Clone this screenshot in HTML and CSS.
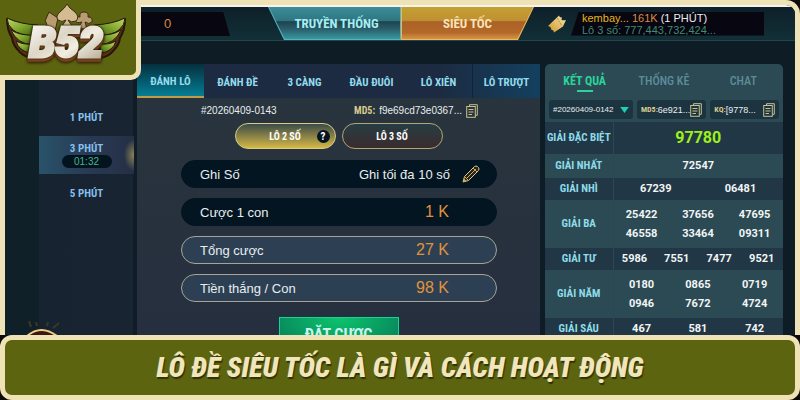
FILE: index.html
```html
<!DOCTYPE html>
<html lang="vi">
<head>
  <meta charset="UTF-8" />
  <meta name="viewport" content="width=device-width, initial-scale=1.0"/>
  <title>Lô đề siêu tốc</title>
  <link rel="stylesheet" href="styles.css">
</head>
<body>
  <svg class="sprite" width="0" height="0" aria-hidden="true">
    <symbol id="copy" viewBox="0 0 12 14">
      <path d="M3.5 2.5V.7H11.3V11.3H9.5" fill="none" stroke="currentColor" stroke-width="1"/>
      <rect x=".7" y="2.5" width="8.6" height="10.8" fill="none" stroke="currentColor" stroke-width="1"/>
      <path d="M2.5 5.5H7.5M2.5 8H7.5M2.5 10.5H6" stroke="currentColor" stroke-width="1.2"/>
    </symbol>
  </svg>

  <div class="page">
    <div class="game">
      <header class="topbar">
        <div class="balance">0</div>
        <nav class="modes">
          <button class="mode classic"><span>TRUYỀN THỐNG</span></button>
          <button class="mode speed"><span>SIÊU TỐC</span></button>
        </nav>
        <div class="winner">
          <svg class="ticket" viewBox="0 0 20 20">
            <defs>
              <linearGradient id="gold" x1="1" y1="0" x2="0" y2="1">
                <stop offset="0" stop-color="#f6e6ae"/>
                <stop offset="1" stop-color="#d09426"/>
              </linearGradient>
            </defs>
            <path d="M1 12L12 1.500Q12.500 4 15 3.500L14.500 6Q17 6.500 19 6L16 12.500L7 18.500Q7 15.500 4.500 16Q4 12.500 1 12Z" fill="url(#gold)"/>
            <path d="M10 4L15 12" stroke="#b98a35" stroke-width="1" stroke-dasharray="2 1"/>
          </svg>
          <div class="winner-box">
            <p><b class="name">kembay...</b> <b class="sum">161K</b> (1 PHÚT)</p>
            <p class="numbers">Lô 3 số: 777,443,732,424...</p>
          </div>
        </div>
      </header>

      <main class="columns">
        <aside class="rounds">
          <button class="round">1 PHÚT</button>
          <button class="round active">3 PHÚT <span class="timer">01:32</span></button>
          <button class="round">5 PHÚT</button>
          <!-- top of the jackpot coin -->
          <svg class="coin" viewBox="0 0 40 14">
            <path d="M10 6L8 0M16 5L15 1M26 5L27 1M32 7L38 2" stroke="#3a3a24" stroke-width="2"/>
            <path d="M6 15Q20 3 36 15Z" fill="#3a1a10" stroke="#f0cf86" stroke-width="2"/>
          </svg>
        </aside>

        <section class="bet">
          <nav class="tabs">
            <button class="tab active">ĐÁNH LÔ</button>
            <button class="tab">ĐÁNH ĐỀ</button>
            <button class="tab">3 CÀNG</button>
            <button class="tab">ĐẦU ĐUÔI</button>
            <button class="tab">LÔ XIÊN</button>
            <button class="tab last">LÔ TRƯỢT</button>
          </nav>
          <div class="session">
            <span>#20260409-0143</span>
            <span class="hash"><b>MD5:</b> f9e69cd73e0367...
              <svg class="copy"><use href="#copy"/></svg>
            </span>
          </div>
          <div class="kinds">
            <button class="kind active">LÔ 2 SỐ <span class="help">?</span></button>
            <button class="kind">LÔ 3 SỐ</button>
          </div>
          <div class="rows">
            <div class="row dark">
              <span>Ghi Số</span>
              <span class="hint">Ghi tối đa 10 số</span>
              <svg class="pencil" viewBox="0 0 18 18">
                <path d="M1 17L2.500 11.500L12.500 1.500Q14 .5 15.500 1.500L16.500 2.500Q17.500 4 16.500 5.500L6.500 15.500Z" fill="#26241c" stroke="#d8c98c" stroke-width="1"/>
                <path d="M4.500 13.500L14 4M2.500 11.500L6.500 15.500M11 3L15 7" stroke="#c9a552" stroke-width="1"/>
                <path d="M1 17L2 13.500L4.500 16Z" fill="#e2a83c"/>
              </svg>
            </div>
            <div class="row dark"><span>Cược 1 con</span><span class="amount">1 K</span></div>
            <div class="row"><span>Tổng cược</span><span class="amount">27 K</span></div>
            <div class="row"><span>Tiền thắng / Con</span><span class="amount">98 K</span></div>
          </div>
          <button class="submit-btn">ĐẶT CƯỢC</button>
        </section>

        <section class="results">
          <nav class="result-tabs">
            <button class="result-tab active">KẾT QUẢ</button>
            <button class="result-tab">THỐNG KÊ</button>
            <button class="result-tab">CHAT</button>
          </nav>
          <div class="filters">
            <div class="filter picker">
              <select aria-label="Phiên">
                <option>#20260409-0142</option>
              </select>
              <svg class="arrow" viewBox="0 0 10 7"><path d="M0 0H10L5 7Z" fill="#17d3b4"/></svg>
            </div>
            <div class="filter"><b>MD5:</b><span>6e921...</span><svg class="copy"><use href="#copy"/></svg></div>
            <div class="filter"><b>KQ:</b><span>[9778...</span><svg class="copy"><use href="#copy"/></svg></div>
          </div>
          <table class="prizes">
            <colgroup><col class="label-col"><col span="12"></colgroup>
            <tr class="shade special"><th>GIẢI ĐẶC BIỆT</th><td colspan="12">97780</td></tr>
            <tr class="first"><th>GIẢI NHẤT</th><td colspan="12">72547</td></tr>
            <tr class="shade"><th>GIẢI NHÌ</th><td colspan="6">67239</td><td colspan="6">06481</td></tr>
            <tr class="upper"><th rowspan="2">GIẢI BA</th><td colspan="4">25422</td><td colspan="4">37656</td><td colspan="4">47695</td></tr>
            <tr class="lower"><td colspan="4">46558</td><td colspan="4">33464</td><td colspan="4">09311</td></tr>
            <tr class="shade"><th>GIẢI TƯ</th><td colspan="3">5986</td><td colspan="3">7551</td><td colspan="3">7477</td><td colspan="3">9521</td></tr>
            <tr class="upper"><th rowspan="2">GIẢI NĂM</th><td colspan="4">0180</td><td colspan="4">0865</td><td colspan="4">0719</td></tr>
            <tr class="lower"><td colspan="4">0946</td><td colspan="4">7672</td><td colspan="4">4724</td></tr>
            <tr class="shade"><th>GIẢI SÁU</th><td colspan="4">467</td><td colspan="4">581</td><td colspan="4">742</td></tr>
          </table>
        </section>
      </main>
    </div>

    <div class="logo">
      <svg viewBox="0 0 124 68" role="img" aria-label="B52">
        <defs>
          <linearGradient id="steel" x1="0" y1="0" x2="1" y2="1">
            <stop offset="0" stop-color="#ffffff"/>
            <stop offset=".4" stop-color="#ddd6c6"/>
            <stop offset=".6" stop-color="#f1ede2"/>
            <stop offset="1" stop-color="#a79c82"/>
          </linearGradient>
          <linearGradient id="wing" x1="0" y1="0" x2="1" y2="1">
            <stop offset="0" stop-color="#c3da6a"/>
            <stop offset=".5" stop-color="#7fa52c"/>
            <stop offset="1" stop-color="#33590f"/>
          </linearGradient>
        </defs>
        <g id="left-wing" stroke="#24180b" stroke-linejoin="round">
          <path d="M2 16Q16 22 32 24L26 55Q17 53 13 47Q8 42 7 35Q2 27 2 16Z" fill="#5a2e12" stroke-width="2"/>
          <path d="M2 15Q14 21 33 22L30 33Q14 32 8 27Q2 22 2 15Z" fill="url(#wing)" stroke-width="1"/>
          <path d="M6 27Q15 33 30 32L28 42Q12 41 6 27Z" fill="url(#wing)" stroke-width="1"/>
          <path d="M11 38Q18 42 28 41L25 50Q14 48 11 38Z" fill="url(#wing)" stroke-width="1"/>
        </g>
        <use href="#left-wing" transform="matrix(-1 0 0 1 122 0)"/>
        <!-- card suits -->
        <g fill="#b99d70" stroke="#3d2a18" stroke-width="1">
          <path d="M44 9L53 15L50 28H41Q43 20 40 18Z"/>
          <path d="M79 9Q84 9 83 14Q88 14 87 19Q84 22 80 19L82 26H72L77 19Q71 21 70 17Q71 13 75 14Q74 9 79 9Z"/>
          <path d="M62 1Q64 5 70 9Q75 14 71 18Q66 20 63 17L67 23H57L61 17Q57 20 53 17Q50 13 55 9Q60 5 62 1Z" fill="#d3bc8f"/>
        </g>
        <text class="logo-text" x="61" y="54" text-anchor="middle" fill="url(#steel)" stroke="url(#steel)" stroke-width="3">B52</text>
      </svg>
    </div>

    <footer class="banner">
      <h1>LÔ ĐỀ SIÊU TỐC LÀ GÌ VÀ CÁCH HOẠT ĐỘNG</h1>
    </footer>
  </div>
</body>
</html>
```
FILE: styles.css
```css
* {
  box-sizing: border-box;
}

body {
  margin: 0;
  background: #0d0a0b;
  font-family: "Liberation Sans", Arial, sans-serif;
  color: #e8eef0;
}

button {
  margin: 0;
  padding: 0;
  border: none;
  background: none;
  color: inherit;
  font-family: "Roboto Condensed", "Liberation Sans Narrow", "Liberation Sans", sans-serif;
  font-weight: bold;
  cursor: pointer;
}

p {
  margin: 0;
}

.sprite {
  position: absolute;
}

.page {
  position: relative;
  display: flex;
  flex-direction: column;
  height: 100vh;
  overflow: hidden;
}

.game {
  flex: 1;
  min-height: 0;
  display: flex;
  flex-direction: column;
  overflow: hidden;
  border: 5px solid #efe2b6;
  border-bottom: none;
  border-radius: 0 14px 0 0;
  background: #0e1d25;
}

/* top bar */
.topbar {
  flex: none;
  display: flex;
  height: 36px;
  border-top: 2px solid #f7f3ee;
  border-bottom: 1px solid #24444a;
  background: linear-gradient(#0e2029, #122f37);
}

.balance {
  width: 225px;
  height: 24px;
  margin-top: 5px;
  padding-left: 159px;
  background: #080611;
  clip-path: polygon(0 0, 97% 0, 100% 100%, 0 100%);
  color: #d98a3d;
  font-size: 13px;
  line-height: 24px;
}

.modes {
  display: flex;
  width: 266px;
  margin-left: 38px;
}

.mode {
  flex: 1;
  padding: 0 1px 1px;
  font-size: 13px;
}

.mode span {
  display: block;
  height: 100%;
  line-height: 33px;
}

.classic {
  background: #53b5bd;
  clip-path: polygon(0 0, 100% 0, 100% 100%, 12% 100%);
  color: #a5eef3;
}

.classic span {
  padding-left: 4px;
  background: linear-gradient(#3c8d97, #2f7682 42%, #1d4450 46%, #2a606b 70%, #3a98a2);
  clip-path: polygon(0 0, 100% 0, 100% 100%, 12% 100%);
}

.speed {
  background: #f0b759;
  clip-path: polygon(0 0, 100% 0, 88% 100%, 0 100%);
  color: #f8e3b4;
}

.speed span {
  background: linear-gradient(#c3a032, #c09032 42%, #ab6126 46%, #b4692a 80%, #d39546);
  clip-path: polygon(0 0, 100% 0, 88% 100%, 0 100%);
}

.winner {
  flex: 1;
  display: flex;
  align-items: center;
  gap: 4px;
  padding: 0 31px 0 13px;
}

.ticket {
  width: 20px;
  height: 20px;
}

.winner-box {
  flex: 1;
  height: 24px;
  padding-left: 11px;
  background: #080611;
  clip-path: polygon(4% 0, 100% 0, 100% 100%, 0 100%);
  font-size: 11px;
  line-height: 12px;
  white-space: nowrap;
}

.winner-box b {
  font-weight: normal;
}

.name {
  color: #e3b51c;
}

.sum {
  color: #dd8a45;
}

.numbers {
  color: #3f8c74;
}

/* three columns */
.columns {
  flex: 1;
  min-height: 0;
  display: flex;
  padding: 23px 12px 0 0;
}

.rounds {
  position: relative;
  flex: none;
  width: 132px;
  padding: 34px 3px 0 34px;
  background: linear-gradient(90deg, #0f2028 34px, #172330 34px, #182431 128px, #101c27 128px);
}

.round {
  display: block;
  width: 100%;
  height: 38px;
  color: #86bfea;
  font-size: 11px;
}

.round.active {
  background:
    radial-gradient(ellipse 10px 16px at right, #8b8355, transparent),
    linear-gradient(90deg, #285369, #293a55 50%, #242f45);
}

.timer {
  display: block;
  width: 50px;
  margin: 0 auto;
  border-radius: 7px;
  background: #04141f;
  color: #45b58d;
  font: 10px/13px "Liberation Sans", Arial, sans-serif;
}

.coin {
  position: absolute;
  bottom: 0;
  left: 16px;
  width: 40px;
  height: 14px;
}

.bet {
  flex: 1;
  display: flex;
  flex-direction: column;
  background: linear-gradient(#29353d, #262f3f);
}

.tabs {
  flex: none;
  display: flex;
  background: linear-gradient(90deg, #1c2b41 75%, #13405f);
}

.tab {
  flex: 1;
  height: 34px;
  padding-top: 3px;
  color: #93dcee;
  font-size: 11px;
}

.tab.active {
  border-bottom: 2px solid #c19a4a;
  background: linear-gradient(#05303f, #057e94);
}

.tab.last {
  border-left: 1px solid #0d2635;
}

.session {
  flex: none;
  display: flex;
  justify-content: space-between;
  align-items: center;
  height: 25px;
  padding: 0 62px 0 64px;
  font-size: 10px;
}

.hash {
  display: flex;
  align-items: center;
  gap: 4px;
}

.hash b {
  color: #d8cb8e;
  font-family: "Roboto Condensed", "Liberation Sans Narrow", "Liberation Sans", sans-serif;
}

.copy {
  flex: none;
  width: 12px;
  height: 14px;
  color: #c6c18e;
}

.kinds {
  flex: none;
  display: flex;
  justify-content: center;
  gap: 6px;
}

.kind {
  position: relative;
  width: 101px;
  height: 26px;
  border: 1px solid #b3a574;
  border-radius: 13px;
  background: linear-gradient(#263d43, #3b2b2d);
  color: #fff;
  font-size: 10px;
}

.kind.active {
  border-color: #d9cd86;
  background: linear-gradient(#3b4b48, #d5b846);
}

.help {
  position: absolute;
  top: 6px;
  right: 5px;
  width: 13px;
  height: 13px;
  border-radius: 50%;
  background: #04141f;
  font-size: 11px;
  line-height: 13px;
}

.rows {
  flex: none;
  display: flex;
  flex-direction: column;
  gap: 10px;
  padding: 11px 43px 0 44px;
}

.row {
  display: flex;
  justify-content: space-between;
  align-items: center;
  height: 28px;
  padding: 0 47px 0 18px;
  border: 1px solid #a9a393;
  border-radius: 14px;
  background: #2d4053;
  font-size: 13px;
}

.row.dark {
  border-color: #021520;
  background: #021520;
}

.hint {
  margin-left: auto;
}

.row:has(.pencil) {
  padding-right: 16px;
}

.pencil {
  width: 18px;
  height: 18px;
  margin-left: 12px;
}

.amount {
  color: #e0933a;
  font-size: 16px;
}

.submit-btn {
  flex: none;
  width: 120px;
  height: 34px;
  margin: 15px auto 0;
  border: 1px solid #12d695;
  background: radial-gradient(ellipse at top, #0cc46c, #067a58);
  color: #c9f3ee;
  font-size: 16px;
}

/* results */
.results {
  flex: none;
  width: 238px;
  margin-left: 5px;
  border-radius: 5px 5px 0 0;
  background: #2c4a54;
  overflow: hidden;
}

.result-tabs {
  display: flex;
}

.result-tab {
  position: relative;
  flex: 1;
  height: 34px;
  color: #5f8c9b;
  font-size: 12px;
  font-weight: 500;
}

.result-tab.active {
  color: #2bd49a;
  font-weight: bold;
}

.result-tab.active::after {
  content: "";
  position: absolute;
  bottom: 6px;
  left: 50%;
  width: 16px;
  height: 2px;
  margin-left: -8px;
  background: #2bd49a;
}

.filters {
  display: flex;
  gap: 4px;
  padding: 2px 4px 3px;
}

.filter {
  flex: 1;
  display: flex;
  align-items: center;
  height: 19px;
  padding: 0 4px;
  border-radius: 3px;
  background: #1c3440;
  font-size: 9px;
  white-space: nowrap;
}

.filter b {
  color: #d8cb8e;
  font-family: "Roboto Condensed", "Liberation Sans Narrow", "Liberation Sans", sans-serif;
  font-size: 8px;
}

.filter .copy {
  margin-left: auto;
}

.picker {
  flex: none;
  width: 84px;
}

.picker select {
  flex: 1;
  min-width: 0;
  padding: 0;
  border: none;
  appearance: none;
  background: none;
  color: inherit;
  font: 8px "Liberation Sans", Arial, sans-serif;
}

.arrow {
  flex: none;
  width: 9px;
  height: 6px;
}

.prizes {
  width: 100%;
  table-layout: fixed;
  border-collapse: collapse;
  font-family: Roboto, sans-serif;
  font-size: 11px;
  font-weight: bold;
  line-height: 14px;
  text-align: center;
}

.label-col {
  width: 68px;
}

.prizes th,
.prizes td {
  height: 22px;
  padding: 0;
  color: #f2f5f5;
}

.prizes th {
  border-right: 1px solid #2a4753;
  color: #8edbe8;
  font-family: "Roboto Condensed", "Liberation Sans Narrow", "Liberation Sans", sans-serif;
  white-space: nowrap;
}

.prizes .shade {
  background: #213746;
}

.prizes .special td {
  height: 32px;
  color: #9df01a;
  font-size: 16px;
}

.prizes .first td {
  height: 24px;
}

.prizes .upper td {
  height: 24px;
  padding-top: 6px;
}

.prizes .lower td {
  height: 24px;
  padding-bottom: 4px;
}

/* corner logo */
.logo {
  position: absolute;
  top: 0;
  left: 0;
  padding: 3px 7px 4px 5px;
  border: solid #efe2b6;
  border-width: 0 5px 5px 0;
  border-radius: 0 0 10px 0;
  background: #5d640f;
}

.logo svg {
  display: block;
  width: 124px;
  height: 68px;
}

.logo-text {
  font-family: Roboto, "Liberation Sans", sans-serif;
  font-size: 42px;
  font-style: italic;
  font-weight: 900;
  filter: drop-shadow(0 0 1px #24180b) drop-shadow(0 3px 0 #7a451d) drop-shadow(0 1px 1px #1d1209);
}

/* title banner */
.banner {
  flex: none;
  display: flex;
  justify-content: center;
  align-items: center;
  height: 65px;
  border: 5px solid #efe2b6;
  border-radius: 12px;
  background: #5d640f;
}

.banner h1 {
  margin: 0;
  color: #f1e5bb;
  font-family: "Roboto Condensed", "Liberation Sans Narrow", "Liberation Sans", sans-serif;
  font-size: 28px;
  font-style: italic;
  font-weight: 900;
  text-shadow: 1px 2px 1px #2e3306;
}
```
